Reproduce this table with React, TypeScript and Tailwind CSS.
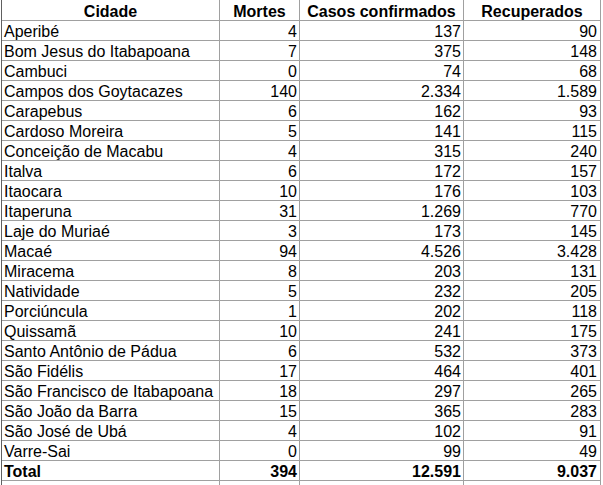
const rows: [string, string, string, string][] = [
  ['Aperibé', '4', '137', '90'],
  ['Bom Jesus do Itabapoana', '7', '375', '148'],
  ['Cambuci', '0', '74', '68'],
  ['Campos dos Goytacazes', '140', '2.334', '1.589'],
  ['Carapebus', '6', '162', '93'],
  ['Cardoso Moreira', '5', '141', '115'],
  ['Conceição de Macabu', '4', '315', '240'],
  ['Italva', '6', '172', '157'],
  ['Itaocara', '10', '176', '103'],
  ['Itaperuna', '31', '1.269', '770'],
  ['Laje do Muriaé', '3', '173', '145'],
  ['Macaé', '94', '4.526', '3.428'],
  ['Miracema', '8', '203', '131'],
  ['Natividade', '5', '232', '205'],
  ['Porciúncula', '1', '202', '118'],
  ['Quissamã', '10', '241', '175'],
  ['Santo Antônio de Pádua', '6', '532', '373'],
  ['São Fidélis', '17', '464', '401'],
  ['São Francisco de Itabapoana', '18', '297', '265'],
  ['São João da Barra', '15', '365', '283'],
  ['São José de Ubá', '4', '102', '91'],
  ['Varre-Sai', '0', '99', '49'],
];

const cell = 'border-r border-b border-[#a0a0a0] h-[20px] leading-[22px] whitespace-nowrap';
const head = 'border-r border-b border-[#a0a0a0] h-[21px] leading-[23px] whitespace-nowrap font-bold text-center';

export default function App() {
  return (
    <div
      className="w-[603px] h-[485px] overflow-hidden bg-white text-black text-[16px] pl-px"
      style={{ fontFamily: '"Liberation Sans", Arial, sans-serif' }}
    >
      <div className="grid grid-cols-[218px_80px_164px_137px] border-l border-[#606060]">
        {/* Header */}
        <div className={head}>Cidade</div>
        <div className={head}>Mortes</div>
        <div className={head}>Casos confirmados</div>
        <div className={head}>Recuperados</div>

        {rows.map(([city, deaths, cases, recovered]) => (
          <Row key={city} city={city} deaths={deaths} cases={cases} recovered={recovered} />
        ))}

        {/* Total */}
        <div className={`${cell} font-bold pl-[2px]`}>Total</div>
        <div className={`${cell} font-bold text-right pr-[2px]`}>394</div>
        <div className={`${cell} font-bold text-right pr-[2px]`}>12.591</div>
        <div className={`${cell} font-bold text-right pr-[3px]`}>9.037</div>

        {/* partial next row */}
        <div className={cell}></div>
        <div className={cell}></div>
        <div className={cell}></div>
        <div className={cell}></div>
      </div>
    </div>
  );
}

function Row({
  city,
  deaths,
  cases,
  recovered,
}: {
  city: string;
  deaths: string;
  cases: string;
  recovered: string;
}) {
  return (
    <>
      <div className={`${cell} pl-[2px]`}>{city}</div>
      <div className={`${cell} text-right pr-[2px]`}>{deaths}</div>
      <div className={`${cell} text-right pr-[2px]`}>{cases}</div>
      <div className={`${cell} text-right pr-[3px]`}>{recovered}</div>
    </>
  );
}
